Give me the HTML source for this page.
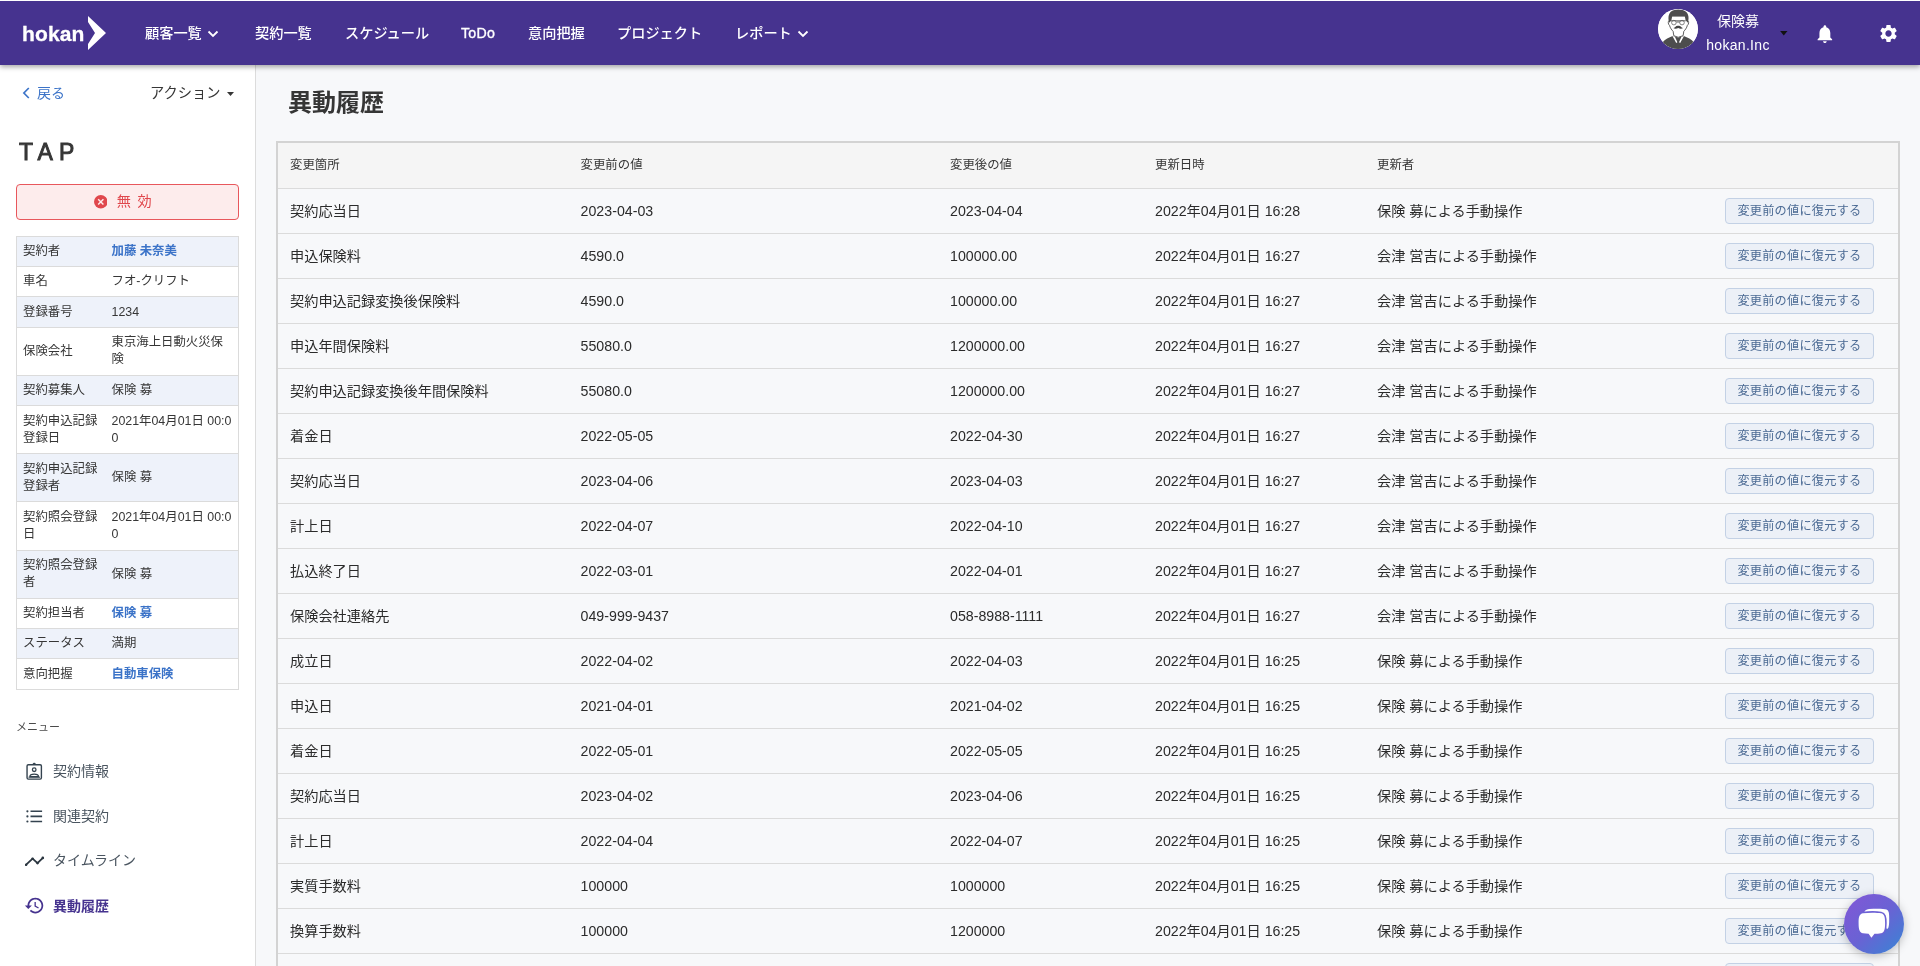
<!DOCTYPE html>
<html lang="ja">
<head>
<meta charset="utf-8">
<title>異動履歴</title>
<style>
*{box-sizing:border-box;margin:0;padding:0}
html,body{width:1920px;height:966px;overflow:hidden;background:#f7f8fa;font-family:"Liberation Sans","Noto Sans CJK JP",sans-serif;color:#333;font-size:14px}
body{position:relative;will-change:transform}
.topline{position:absolute;left:0;top:0;width:1920px;height:1px;background:#fff;z-index:30}
.hdr{position:absolute;left:0;top:0;width:1920px;height:65px;background:#46338f;box-shadow:0 2px 5px rgba(0,0,0,.35);z-index:20;color:#fff}
.logo{position:absolute;left:22px;top:19.5px;font-weight:bold;font-size:21px;letter-spacing:.15px;line-height:28px;-webkit-text-stroke:.3px #fff}
.logo-arrow{position:absolute;left:87px;top:16px}
.nav{position:absolute;top:.7px;height:65px;line-height:65px;font-size:14.2px;white-space:nowrap;font-weight:500}
.nav svg{vertical-align:middle;margin-left:5px;position:relative;top:.5px}
.avatar{position:absolute;left:1658px;top:9px;width:40px;height:40px;border-radius:50%;background:#fff;overflow:hidden}
.uname{position:absolute;left:1688px;width:100px;text-align:center;font-size:14px;line-height:20px;white-space:nowrap}
.side{position:absolute;left:0;top:65px;width:256px;height:901px;background:#fff;border-right:1px solid #dcdcdc}
.back{position:absolute;left:22px;top:17.7px;color:#3b73c8;font-size:14px;line-height:20px;white-space:nowrap}
.action{position:absolute;left:150px;top:17.7px;color:#363636;font-size:14.25px;line-height:20px;white-space:nowrap}
.tap{position:absolute;left:19px;top:71px;font-size:23px;line-height:32px;font-weight:normal;-webkit-text-stroke:.9px #363636;letter-spacing:6.1px;color:#363636}
.status{position:absolute;left:16px;top:119px;width:223px;height:36px;border:1px solid #e8575c;border-radius:4px;background:#fdecec;color:#e0474c;font-size:14.2px;line-height:34px}
.status svg{position:absolute;left:76.8px;top:10.3px}
.status span{position:absolute;left:99.8px;top:-1px;letter-spacing:1.3px;white-space:nowrap}
.info{position:absolute;left:16px;top:170.6px;width:223px;border:1px solid #dbdbdb;border-bottom:none;font-size:12.4px;line-height:17px}
.info .r{display:flex;align-items:center;border-bottom:1px solid #dbdbdb;height:30.4px}
.info .r.d{height:48.1px}
.info .r:nth-child(odd){background:#eef2fa}
.info .r:nth-child(even){background:#fff}
.info .k{width:88.5px;padding-left:6px;padding-right:4px;color:#363636;flex:none}
.info .v{padding-left:6px;width:128px;flex:none;color:#363636;word-break:break-all}
.info .v a{color:#3b73c8;font-weight:bold;text-decoration:none}
.menu-label{position:absolute;left:16px;top:654px;font-size:11px;line-height:16px;color:#4a4a4a}
.mi{position:absolute;left:25px;font-size:14px;line-height:20px;color:#4a5560;white-space:nowrap}
.mi svg{position:absolute;left:0;top:0}
.mi span{position:absolute;left:28px;top:0}
.mi.act{color:#46338f;font-weight:bold}
.main-title{position:absolute;left:288px;top:86.8px;font-size:24px;line-height:32px;font-weight:bold;color:#363636;white-space:nowrap}
.tbl{position:absolute;left:276px;top:141px;width:1624px;height:900px;border:2px solid #d3d3d3;border-bottom:none;background:#f7f8fa}
.th{height:46px;background:#f5f5f5;border-bottom:1px solid #dbdbdb;position:relative;font-size:12.4px;color:#363636}
.th div{position:absolute;top:1.2px;line-height:43px;white-space:nowrap}
.tr{height:45px;border-bottom:1px solid #dbdbdb;position:relative;font-size:14.2px;color:#2b2b2b}
.tr div{position:absolute;top:0;line-height:44px;white-space:nowrap}
.c1{left:12px}.c2{left:302.6px}.c3{left:672px}.c4{left:877px}.c5{left:1099px}.c6{left:1447px}
.tr .c6{top:9px;width:148.6px;height:25.5px;line-height:24.5px;border:1px solid #c3d1e5;border-radius:4px;background:#ecf0f7;color:#4b6a94;font-size:12.15px;text-align:center;letter-spacing:.27px;text-indent:.27px}
.chat{position:absolute;left:1844px;top:894px;width:60px;height:60px;border-radius:50%;background:linear-gradient(135deg,#7b5ad6 15%,#6a62d4 50%,#3f80d4 92%);box-shadow:0 2px 10px rgba(0,0,0,.25);z-index:40}
</style>
</head>
<body>
<div class="hdr">
  <div class="logo">hokan</div>
  <svg class="logo-arrow" width="20" height="34" viewBox="0 0 20 34"><path d="M1 0 L19 17 L1 34 L1 28 L8 17 L1 6 Z" fill="#fff"/></svg>
  <div class="nav" style="left:145px">顧客一覧<svg width="12" height="8" viewBox="0 0 12 8"><path d="M1.5 1.5 L6 6 L10.5 1.5" fill="none" stroke="#fff" stroke-width="1.8"/></svg></div>
  <div class="nav" style="left:255px">契約一覧</div>
  <div class="nav" style="left:345px">スケジュール</div>
  <div class="nav" style="left:461px;-webkit-text-stroke:.35px #fff;letter-spacing:.25px">ToDo</div>
  <div class="nav" style="left:528px">意向把握</div>
  <div class="nav" style="left:617px">プロジェクト</div>
  <div class="nav" style="left:735px">レポート<svg width="12" height="8" viewBox="0 0 12 8"><path d="M1.5 1.5 L6 6 L10.5 1.5" fill="none" stroke="#fff" stroke-width="1.8"/></svg></div>
  <div class="avatar">
    <svg width="40" height="40" viewBox="0 0 40 40">
      <circle cx="20" cy="20" r="20" fill="#fff"/>
      <path d="M2 40 L4.500 33.500 C7 30 11 28.800 14.600 27 L20.200 28.500 L25.800 27 C29.500 28.800 33.500 30 36 33.500 L38 40 Z" fill="#4d4d4d"/>
      <path d="M15 22 L15.800 26.700 L20.200 28.300 L25.100 26.700 L25.900 22 Z" fill="#fff"/>
      <path d="M14.400 27 L16.800 27.600 L19.400 33.200 L18.200 34 Z M26 27 L23.600 27.600 L21 33.200 L22.200 34 Z" fill="#fff"/>
      <path d="M11.300 11.500 C9.800 12 10 15.500 11.500 16.300 C12.200 19 13.800 21 15.100 22.300 L15.800 26.700 L20.200 28.300 L25.100 26.700 L25.800 22.300 C27.100 21 28.700 19 29.400 16.300 C30.900 15.500 31.100 12 29.600 11.500 L28 7 L13 7 Z" fill="#fff" stroke="#4d4d4d" stroke-width=".9" stroke-linejoin="round"/>
      <path d="M11.200 13.800 C9.600 8 10.500 2.800 15.500 1.200 C19.500 0 25 .3 28 2.800 C31 5.500 31 10 29.800 13.800 L27.600 11.300 L26.800 7.200 L14.200 7.200 L13.400 11.300 Z" fill="#4d4d4d"/>
      <circle cx="15.900" cy="13.600" r="2.300" fill="#fff" stroke="#666" stroke-width=".8"/>
      <circle cx="24" cy="13.600" r="2.300" fill="#fff" stroke="#666" stroke-width=".8"/>
      <path d="M12.500 11.800 L27.800 11.800 M18.500 13 L21.700 13" stroke="#555" stroke-width=".9" fill="none"/>
      <path d="M15.300 19 C16.500 19.200 18 16.200 20.200 16.800 C22.400 16.200 23.900 19.200 25.100 19 C23.500 20.200 21.500 19.600 20.200 18.900 C18.900 19.600 16.900 20.200 15.300 19 Z" fill="#444"/>
    </svg>
  </div>
  <div class="uname" style="top:10.5px">保険募</div>
  <div class="uname" style="top:35px;letter-spacing:.3px">hokan.Inc</div>
  <svg style="position:absolute;left:1780px;top:31px" width="7.6" height="4.6" viewBox="0 0 8 5"><path d="M0 0 L8 0 L4 5 Z" fill="#111"/></svg>
  <svg style="position:absolute;left:1813.9px;top:22.6px" width="21.75" height="21.75" viewBox="0 0 24 24"><path d="M12 22c1.100 0 2-.9 2-2h-4c0 1.100.9 2 2 2zm6-6v-5c0-3.070-1.640-5.640-4.500-6.320V4c0-.83-.67-1.500-1.500-1.500s-1.500.67-1.500 1.500v.68C7.630 5.360 6 7.920 6 11v5l-2 2v1h16v-1l-2-2z" fill="#fff"/></svg>
  <svg style="position:absolute;left:1878px;top:23px" width="21" height="21" viewBox="0 0 24 24"><path d="M19.140 12.940c.04-.3.060-.61.060-.94 0-.32-.02-.64-.07-.94l2.030-1.580c.18-.14.230-.41.120-.61l-1.920-3.320c-.12-.22-.37-.29-.59-.22l-2.390.96c-.5-.38-1.030-.7-1.620-.94l-.36-2.540c-.04-.24-.24-.41-.48-.41h-3.840c-.24 0-.43.170-.47.410l-.36 2.540c-.59.240-1.130.57-1.620.94l-2.390-.96c-.22-.08-.47 0-.59.220L2.740 8.870c-.12.210-.08.470.12.610l2.030 1.580c-.05.300-.09.630-.09.940s.02.640.07.940l-2.030 1.580c-.18.140-.23.410-.12.610l1.920 3.320c.12.220.37.290.59.220l2.390-.96c.5.380 1.030.7 1.620.94l.36 2.540c.05.240.24.410.48.410h3.840c.24 0 .44-.17.470-.41l.36-2.540c.59-.24 1.130-.56 1.620-.94l2.390.96c.22.080.47 0 .59-.22l1.920-3.320c.12-.22.070-.47-.12-.61l-2.010-1.580zM12 15.600c-1.980 0-3.600-1.620-3.600-3.600s1.620-3.600 3.600-3.600 3.600 1.620 3.600 3.600-1.620 3.600-3.600 3.600z" fill="#fff"/></svg>
</div>
<div class="topline"></div>

<div class="side">
  <div class="back"><svg width="8" height="12" viewBox="0 0 8 12" style="vertical-align:-1px;margin-right:7px"><path d="M6.800 1 L1.900 6 L6.800 11" fill="none" stroke="#3b73c8" stroke-width="1.700"/></svg>戻る</div>
  <div class="action">アクション<svg width="7" height="4" viewBox="0 0 7 4" style="vertical-align:2px;margin-left:6px"><path d="M0 0 L7 0 L3.500 4 Z" fill="#363636"/></svg></div>
  <div class="tap">TAP</div>
  <div class="status"><svg width="13.6" height="13.6" viewBox="0 0 14 14"><circle cx="7" cy="7" r="7" fill="#e0474c"/><path d="M4.300 4.300 L9.700 9.700 M9.700 4.300 L4.300 9.700" stroke="#fdecec" stroke-width="1.500"/></svg><span>無 効</span></div>
  <div class="info">
    <div class="r"><div class="k">契約者</div><div class="v"><a>加藤 未奈美</a></div></div>
    <div class="r"><div class="k">車名</div><div class="v">フオ-クリフト</div></div>
    <div class="r"><div class="k">登録番号</div><div class="v">1234</div></div>
    <div class="r d"><div class="k">保険会社</div><div class="v">東京海上日動火災保険</div></div>
    <div class="r"><div class="k">契約募集人</div><div class="v">保険 募</div></div>
    <div class="r d"><div class="k">契約申込記録登録日</div><div class="v">2021年04月01日 00:00</div></div>
    <div class="r d"><div class="k">契約申込記録登録者</div><div class="v">保険 募</div></div>
    <div class="r d"><div class="k">契約照会登録日</div><div class="v">2021年04月01日 00:00</div></div>
    <div class="r d"><div class="k">契約照会登録者</div><div class="v">保険 募</div></div>
    <div class="r"><div class="k">契約担当者</div><div class="v"><a>保険 募</a></div></div>
    <div class="r"><div class="k">ステータス</div><div class="v">満期</div></div>
    <div class="r"><div class="k">意向把握</div><div class="v"><a>自動車保険</a></div></div>
  </div>
  <div class="menu-label">メニュー</div>
  <div class="mi" style="top:696px"><svg width="19" height="21" viewBox="0 0 19 21"><rect x="2.050" y="3.800" width="14.350" height="14.300" rx="1.300" fill="none" stroke="#34434f" stroke-width="1.400"/><path d="M7.500 3.400 A1.700 1.700 0 0 1 10.900 3.400 Z" fill="#34434f"/><circle cx="9.200" cy="8.700" r="1.800" fill="none" stroke="#34434f" stroke-width="1.300"/><path d="M4.900 15.600 C4.900 12.300 13.500 12.300 13.500 15.600 Z" fill="none" stroke="#34434f" stroke-width="1.300" stroke-linejoin="round"/><path d="M3.500 16.200 H15" stroke="#34434f" stroke-width="1.100"/></svg><span>契約情報</span></div>
  <div class="mi" style="top:741px"><svg width="19" height="21" viewBox="0 0 19 21"><path d="M5.500 5.300 H17.100 M5.500 10.400 H17.100 M5.500 15.500 H17.100" stroke="#34434f" stroke-width="1.600"/><circle cx="2.400" cy="5.300" r="1.100" fill="#34434f"/><circle cx="2.400" cy="10.400" r="1.100" fill="#34434f"/><circle cx="2.400" cy="15.500" r="1.100" fill="#34434f"/></svg><span>関連契約</span></div>
  <div class="mi" style="top:785.4px"><svg width="20" height="20" viewBox="0 0 20 20"><path d="M.900 14.800 L7.600 8.600 L12.500 13.200 L17.900 7.800" fill="none" stroke="#2b3640" stroke-width="1.800" stroke-linejoin="round" stroke-linecap="round"/><circle cx="1.100" cy="14.700" r="1.300" fill="#2b3640"/><circle cx="7.600" cy="8.700" r="1.300" fill="#2b3640"/><circle cx="12.500" cy="13.100" r="1.300" fill="#2b3640"/><circle cx="17.800" cy="7.900" r="1.300" fill="#2b3640"/></svg><span>タイムライン</span></div>
  <div class="mi act" style="top:831px"><svg style="left:-.8px;top:-1.500px" width="21" height="21" viewBox="0 0 24 24"><path d="M13 3c-4.970 0-9 4.030-9 9H1l3.890 3.890.07.140L9 12H6c0-3.870 3.130-7 7-7s7 3.130 7 7-3.130 7-7 7c-1.930 0-3.680-.79-4.940-2.060l-1.420 1.420C8.270 19.990 10.510 21 13 21c4.970 0 9-4.030 9-9s-4.030-9-9-9zm-1 5v5l4.280 2.540.72-1.210-3.500-2.080V8H12z" fill="#46338f"/></svg><span>異動履歴</span></div>
</div>

<div class="main-title">異動履歴</div>
<div class="tbl">
  <div class="th"><div class="c1">変更箇所</div><div class="c2">変更前の値</div><div class="c3">変更後の値</div><div class="c4">更新日時</div><div class="c5">更新者</div></div>
<div class="tr"><div class="c1">契約応当日</div><div class="c2">2023-04-03</div><div class="c3">2023-04-04</div><div class="c4">2022年04月01日 16:28</div><div class="c5">保険 募による手動操作</div><div class="c6">変更前の値に復元する</div></div>
<div class="tr"><div class="c1">申込保険料</div><div class="c2">4590.0</div><div class="c3">100000.00</div><div class="c4">2022年04月01日 16:27</div><div class="c5">会津 営吉による手動操作</div><div class="c6">変更前の値に復元する</div></div>
<div class="tr"><div class="c1">契約申込記録変換後保険料</div><div class="c2">4590.0</div><div class="c3">100000.00</div><div class="c4">2022年04月01日 16:27</div><div class="c5">会津 営吉による手動操作</div><div class="c6">変更前の値に復元する</div></div>
<div class="tr"><div class="c1">申込年間保険料</div><div class="c2">55080.0</div><div class="c3">1200000.00</div><div class="c4">2022年04月01日 16:27</div><div class="c5">会津 営吉による手動操作</div><div class="c6">変更前の値に復元する</div></div>
<div class="tr"><div class="c1">契約申込記録変換後年間保険料</div><div class="c2">55080.0</div><div class="c3">1200000.00</div><div class="c4">2022年04月01日 16:27</div><div class="c5">会津 営吉による手動操作</div><div class="c6">変更前の値に復元する</div></div>
<div class="tr"><div class="c1">着金日</div><div class="c2">2022-05-05</div><div class="c3">2022-04-30</div><div class="c4">2022年04月01日 16:27</div><div class="c5">会津 営吉による手動操作</div><div class="c6">変更前の値に復元する</div></div>
<div class="tr"><div class="c1">契約応当日</div><div class="c2">2023-04-06</div><div class="c3">2023-04-03</div><div class="c4">2022年04月01日 16:27</div><div class="c5">会津 営吉による手動操作</div><div class="c6">変更前の値に復元する</div></div>
<div class="tr"><div class="c1">計上日</div><div class="c2">2022-04-07</div><div class="c3">2022-04-10</div><div class="c4">2022年04月01日 16:27</div><div class="c5">会津 営吉による手動操作</div><div class="c6">変更前の値に復元する</div></div>
<div class="tr"><div class="c1">払込終了日</div><div class="c2">2022-03-01</div><div class="c3">2022-04-01</div><div class="c4">2022年04月01日 16:27</div><div class="c5">会津 営吉による手動操作</div><div class="c6">変更前の値に復元する</div></div>
<div class="tr"><div class="c1">保険会社連絡先</div><div class="c2">049-999-9437</div><div class="c3">058-8988-1111</div><div class="c4">2022年04月01日 16:27</div><div class="c5">会津 営吉による手動操作</div><div class="c6">変更前の値に復元する</div></div>
<div class="tr"><div class="c1">成立日</div><div class="c2">2022-04-02</div><div class="c3">2022-04-03</div><div class="c4">2022年04月01日 16:25</div><div class="c5">保険 募による手動操作</div><div class="c6">変更前の値に復元する</div></div>
<div class="tr"><div class="c1">申込日</div><div class="c2">2021-04-01</div><div class="c3">2021-04-02</div><div class="c4">2022年04月01日 16:25</div><div class="c5">保険 募による手動操作</div><div class="c6">変更前の値に復元する</div></div>
<div class="tr"><div class="c1">着金日</div><div class="c2">2022-05-01</div><div class="c3">2022-05-05</div><div class="c4">2022年04月01日 16:25</div><div class="c5">保険 募による手動操作</div><div class="c6">変更前の値に復元する</div></div>
<div class="tr"><div class="c1">契約応当日</div><div class="c2">2023-04-02</div><div class="c3">2023-04-06</div><div class="c4">2022年04月01日 16:25</div><div class="c5">保険 募による手動操作</div><div class="c6">変更前の値に復元する</div></div>
<div class="tr"><div class="c1">計上日</div><div class="c2">2022-04-04</div><div class="c3">2022-04-07</div><div class="c4">2022年04月01日 16:25</div><div class="c5">保険 募による手動操作</div><div class="c6">変更前の値に復元する</div></div>
<div class="tr"><div class="c1">実質手数料</div><div class="c2">100000</div><div class="c3">1000000</div><div class="c4">2022年04月01日 16:25</div><div class="c5">保険 募による手動操作</div><div class="c6">変更前の値に復元する</div></div>
<div class="tr"><div class="c1">換算手数料</div><div class="c2">100000</div><div class="c3">1200000</div><div class="c4">2022年04月01日 16:25</div><div class="c5">保険 募による手動操作</div><div class="c6">変更前の値に復元する</div></div>
<div class="tr"><div class="c1">手数料</div><div class="c2">100000</div><div class="c3">1100000</div><div class="c4">2022年04月01日 16:25</div><div class="c5">保険 募による手動操作</div><div class="c6">変更前の値に復元する</div></div>
</div>
<div class="chat"><svg width="60" height="60" viewBox="0 0 60 60"><path d="M25 15.100 C32 14.500 40 14.600 42.500 15.600 C44.800 16.700 45.300 19 45.200 25 C45.200 30 45 33 43.800 34.700 L40 34 L40 20 L20 19.500 C20.500 16.500 22 15.400 25 15.100 Z" fill="#fff"/><path d="M19 19.300 C25 18.500 33 18.600 37 19.300 C40.300 20 41.100 22.500 41.100 29 C41.100 35.500 40.300 38.500 37 39.300 C35 39.700 32.500 39.800 30.500 39.800 L27.400 43.800 L24.600 39.800 C22.500 39.800 20.500 39.600 19 39.300 C15.500 38.500 14.600 35.500 14.600 29 C14.600 22.500 15.500 20 19 19.300 Z" fill="#fff" stroke="#6d62d5" stroke-width="3.200" paint-order="stroke"/></svg></div>
</body>
</html>
